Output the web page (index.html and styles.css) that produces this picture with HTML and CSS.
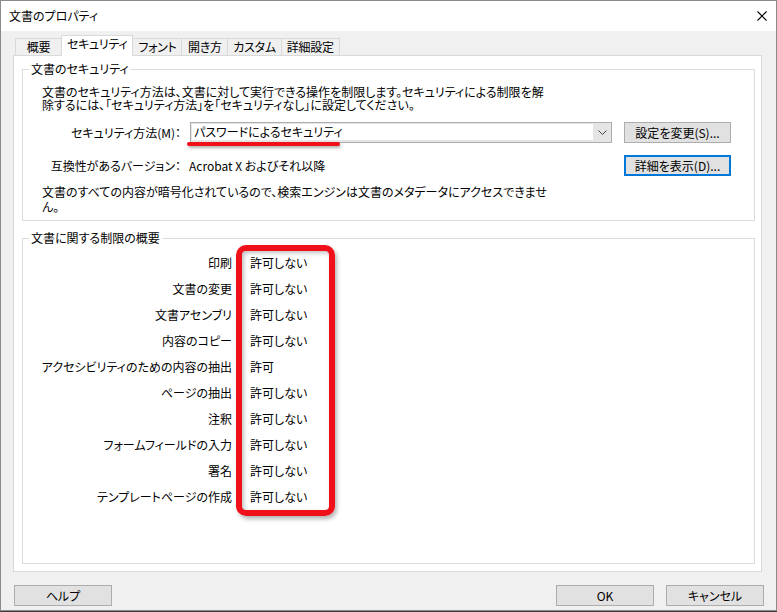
FILE: index.html
```html
<!DOCTYPE html>
<html lang="ja">
<head>
<meta charset="utf-8">
<title>文書のプロパティ</title>
<link rel="stylesheet" href="styles.css">
</head>
<body>
<div class="window">
  <div class="titlebar">
    <span class="title">文書のプロパティ</span>
    <svg class="close" width="10" height="10" viewBox="0 0 10 10"><path d="M0.5 0.5L9.5 9.5M9.5 0.5L0.5 9.5" stroke="#000" stroke-width="1.1" fill="none"/></svg>
  </div>
  <div class="client">
    <div class="tabs">
      <div class="tab">概要</div>
      <div class="tab active">セキュリティ</div>
      <div class="tab">フォント</div>
      <div class="tab">開き方</div>
      <div class="tab">カスタム</div>
      <div class="tab">詳細設定</div>
    </div>
    <div class="panel">
      <fieldset class="group group-security">
        <legend>文書のセキュリティ</legend>
        <p class="desc">文書のセキュリティ方法は、文書に対して実行できる操作を制限します。セキュリティによる制限を解<br>除するには、「セキュリティ方法」を「セキュリティなし」に設定してください。</p>
        <div class="sec-grid">
          <div class="label">セキュリティ方法(M)：</div>
          <div class="combo">
            <div class="combo-field">パスワードによるセキュリティ</div>
            <div class="combo-btn"><svg width="9" height="5" viewBox="0 0 9 5"><path d="M0.5 0.5L4.5 4.5L8.5 0.5" stroke="#444" stroke-width="1" fill="none"/></svg></div>
            <div class="mark-line"></div>
          </div>
          <div class="btn">設定を変更(S)...</div>
          <div class="label">互換性があるバージョン：</div>
          <div class="value">Acrobat X およびそれ以降</div>
          <div class="btn focused">詳細を表示(D)...</div>
        </div>
        <p class="desc desc2">文書のすべての内容が暗号化されているので、検索エンジンは文書のメタデータにアクセスできませ<br>ん。</p>
      </fieldset>
      <fieldset class="group group-summary">
        <legend>文書に関する制限の概要</legend>
        <div class="perm-grid">
          <div class="plabel">印刷</div><div class="pvalue">許可しない</div>
          <div class="plabel">文書の変更</div><div class="pvalue">許可しない</div>
          <div class="plabel">文書アセンブリ</div><div class="pvalue">許可しない</div>
          <div class="plabel">内容のコピー</div><div class="pvalue">許可しない</div>
          <div class="plabel">アクセシビリティのための内容の抽出</div><div class="pvalue">許可</div>
          <div class="plabel">ページの抽出</div><div class="pvalue">許可しない</div>
          <div class="plabel">注釈</div><div class="pvalue">許可しない</div>
          <div class="plabel">フォームフィールドの入力</div><div class="pvalue">許可しない</div>
          <div class="plabel">署名</div><div class="pvalue">許可しない</div>
          <div class="plabel">テンプレートページの作成</div><div class="pvalue">許可しない</div>
          <div class="mark-box"></div>
        </div>
      </fieldset>
    </div>
    <div class="footer">
      <div class="btn fbtn">ヘルプ</div>
      <div class="spacer"></div>
      <div class="btn fbtn">OK</div>
      <div class="btn fbtn">キャンセル</div>
    </div>
  </div>
</div>
</body>
</html>
```

FILE: styles.css
```css
* { box-sizing: border-box; }
html, body { margin: 0; padding: 0; }
body {
  background: #3c3c3c;
  width: 777px;
  height: 612px;
  overflow: hidden;
  font-family: "Noto Sans CJK JP", "Noto Sans", sans-serif;
  font-size: 12px;
  font-feature-settings: "palt";
  color: #000;
}
.window {
  width: 777px;
  height: 611px;
  border: 1px solid #8a8a8a;
  background: #f0f0f0;
  display: flex;
  flex-direction: column;
}
.titlebar {
  height: 30px;
  flex: none;
  background: #fff;
  display: flex;
  align-items: center;
  justify-content: space-between;
  padding: 0 9px 0 8px;
}
.title { line-height: 16px; }
.close { margin-top: -1px; }
.client {
  flex: 1;
  display: flex;
  flex-direction: column;
  padding: 0 14px 0 12px;
}
.tabs {
  height: 24px;
  flex: none;
  display: flex;
  align-items: flex-end;
  margin-left: 2px;
}
.tab {
  height: 17px;
  line-height: 15px;
  min-width: 47px;
  padding: 0 5px;
  text-align: center;
  border: 1px solid #d9d9d9;
  border-bottom: none;
  background: #f0f0f0;
  margin-left: -1px;
  white-space: nowrap;
  letter-spacing: -0.3px;
}
.tab:first-child { margin-left: 0; }
.tab.active {
  height: 21px;
  line-height: 16px;
  margin-bottom: -1px;
  background: #fff;
  position: relative;
  z-index: 1;
}
.panel {
  height: 517px;
  flex: none;
  background: #fff;
  border: 1px solid #d9d9d9;
  display: flex;
  flex-direction: column;
  padding: 0 6px 7px 8px;
}
.group {
  margin: 0;
  padding: 0;
  border: 1px solid #dcdcdc;
  min-width: 0;
}
.group legend {
  line-height: 16px;
  padding: 0 2px;
  margin-left: 6px;
}
.group-security { margin-top: 5px; padding-bottom: 6px; }
.desc {
  margin: 8px 0 0 19px;
  line-height: 13px;
  white-space: nowrap;
}
.desc2 { margin-top: 8px; line-height: 15px; }
.sec-grid {
  margin-top: 11px;
  display: grid;
  grid-template-columns: 158px 422px 110px;
  grid-auto-rows: 21px;
  column-gap: 9px;
  row-gap: 12px;
  align-items: center;
}
.sec-grid .btn { margin-left: 3px; }
.label { text-align: right; white-space: nowrap; line-height: 21px; }
.value { white-space: nowrap; margin-left: -1px; line-height: 21px; }
.combo {
  position: relative;
  height: 21px;
  border: 1px solid #adadad;
  background: #e5e5e5;
  display: flex;
}
.combo-field {
  flex: 1;
  background: #fff;
  margin: 1px 0 2px 1px;
  padding-left: 2px;
  line-height: 16px;
  white-space: nowrap;
}
.combo-btn {
  width: 18px;
  display: flex;
  align-items: center;
  justify-content: center;
}
.mark-line {
  position: absolute;
  left: -4px;
  top: 19px;
  width: 153px;
  height: 4px;
  border-radius: 2px;
  background: #f0101a;
  box-shadow: 1px 2px 3px rgba(0, 0, 0, 0.3);
}
.btn {
  height: 21px;
  background: #e1e1e1;
  border: 1px solid #adadad;
  text-align: center;
  line-height: 19px;
  white-space: nowrap;
}
.btn.focused {
  border: 2px solid #0078d7;
  line-height: 17px;
}
.group-summary {
  flex: 1;
  margin-top: 9px;
}
.perm-grid {
  position: relative;
  margin-top: 3px;
  display: grid;
  grid-template-columns: 209px 1fr;
  grid-auto-rows: 26px;
  column-gap: 18px;
  align-items: center;
}
.plabel { text-align: right; white-space: nowrap; }
.pvalue { white-space: nowrap; }
.mark-box {
  position: absolute;
  left: 213px;
  top: -4px;
  width: 99px;
  height: 271px;
  border: 6px solid #f0101a;
  border-radius: 10px;
  box-shadow: 2px 3px 4px rgba(0, 0, 0, 0.3), inset 2px 2px 4px rgba(0, 0, 0, 0.25);
}
.footer {
  display: flex;
  gap: 12px;
  margin: 13px -2px 0 1px;
}
.spacer { flex: 1; }
.fbtn { width: 98px; }
```
